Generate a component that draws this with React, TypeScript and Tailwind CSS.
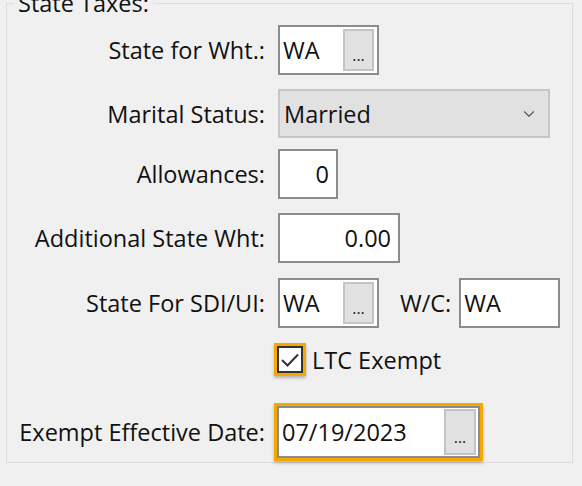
import { ChevronDown } from "lucide-react";

const font = { fontFamily: '"Open Sans", "Noto Sans", sans-serif' };

const Label = ({ text }: { text: string }) => (
  <div className="w-[271px] whitespace-nowrap pr-[13px] text-right">{text}</div>
);

const DotsButton = () => (
  <div className="flex h-[42px] w-[31px] items-end justify-center border-2 border-[#c4c4c4] bg-[#e1e1e1] pb-[6px] text-[16px] leading-none text-[#222]">
    ...
  </div>
);

const LookupBox = ({ value }: { value: string }) => (
  <div className="flex h-[50px] w-[101px] items-center justify-between border-2 border-[#8c8c8c] bg-white pl-[3px] pr-[3px]">
    <span>{value}</span>
    <DotsButton />
  </div>
);

const TextBox = ({
  value,
  width,
  right,
}: {
  value: string;
  width: string;
  right?: boolean;
}) => (
  <div
    className={`flex h-[50px] items-center border-2 border-[#8c8c8c] bg-white px-[7px] ${width} ${
      right ? "justify-end" : "justify-start pl-[3px]"
    }`}
  >
    {value}
  </div>
);

export default function App() {
  return (
    <div
      className="h-[486px] w-[582px] overflow-hidden bg-[#f0f0f0] text-[23.5px] leading-[32px] text-[#111]"
      style={font}
    >
      <fieldset className="-mt-[9px] ml-[6px] h-[472px] w-[567px] border border-[#dcdcdc] p-0">
        <legend className="ml-[7px] px-[4px] leading-[24px]">State Taxes:</legend>

        <div className="mt-[10px] flex items-center">
          <Label text="State for Wht.:" />
          <LookupBox value="WA" />
        </div>

        <div className="mt-[14px] flex items-center">
          <Label text="Marital Status:" />
          <div className="flex h-[49px] w-[272px] items-center justify-between border-2 border-[#c6c6c6] bg-[#e1e1e1] pl-[4px] pr-[10px]">
            <span>Married</span>
            <ChevronDown size={18} strokeWidth={1.5} className="text-[#555]" />
          </div>
        </div>

        <div className="mt-[11px] flex items-center">
          <Label text="Allowances:" />
          <TextBox value="0" width="w-[60px]" right />
        </div>

        <div className="mt-[14px] flex items-center">
          <Label text="Additional State Wht:" />
          <TextBox value="0.00" width="w-[122px]" right />
        </div>

        <div className="mt-[15px] flex items-center">
          <Label text="State For SDI/UI:" />
          <LookupBox value="WA" />
          <span className="ml-[21px] mr-[8px]">W/C:</span>
          <TextBox value="WA" width="w-[101px]" />
        </div>

        <div className="mt-[15px] flex items-center">
          <div className="ml-[267px] flex h-[33px] w-[32px] items-center justify-center border-[3px] border-[#f5a800] shadow-[0_2px_3px_rgba(0,0,0,0.25)]">
            <div className="flex h-full w-full items-center justify-center border-2 border-[#333] bg-white">
              <svg width="20" height="16" viewBox="0 0 20 16">
                <path d="M2 8 L7.5 13.5 L18 2.5" fill="none" stroke="#333" strokeWidth="2" />
              </svg>
            </div>
          </div>
          <span className="ml-[6px]">LTC Exempt</span>
        </div>

        <div className="mt-[27px] flex items-center">
          <Label text="Exempt Effective Date:" />
          <div className="-ml-[4px] border-[3px] border-[#f5a800] shadow-[0_2px_3px_rgba(0,0,0,0.25)]">
            <div className="flex h-[52px] w-[203px] items-center justify-between border-2 border-[#8c8c8c] bg-white pl-[3px] pr-[2px]">
              <span>07/19/2023</span>
              <div className="flex h-[46px] w-[32px] items-end justify-center border-2 border-[#c4c4c4] bg-[#e1e1e1] pb-[8px] text-[16px] leading-none text-[#222]">
                ...
              </div>
            </div>
          </div>
        </div>
      </fieldset>
    </div>
  );
}
